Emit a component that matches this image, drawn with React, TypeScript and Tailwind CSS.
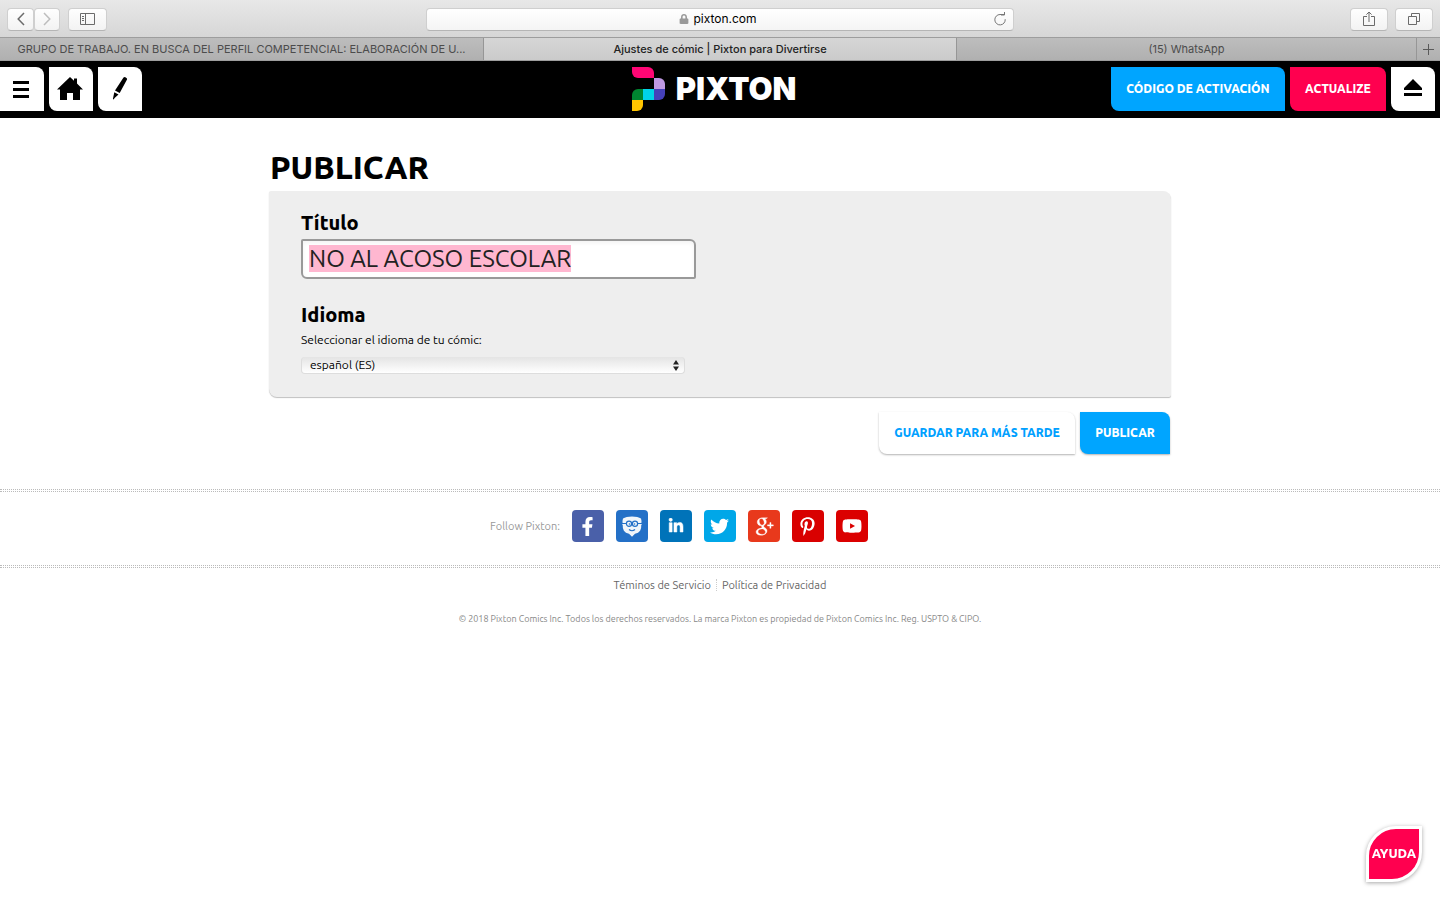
import React, { useEffect, useRef, useState } from "react";
import { FaFacebookF, FaLinkedinIn, FaTwitter, FaPinterestP, FaYoutube, FaLock } from "react-icons/fa";
import { TiSocialGooglePlus } from "react-icons/ti";

const toolbarButton =
  "flex h-[23px] items-center justify-center rounded border border-[#cfcfcf] border-b-[#b5b5b5] bg-linear-to-b from-[#fefefe] to-[#f3f3f3] text-[#6b6b6b]";

const BrowserBar = () => (
  <div className="font-['Inter',sans-serif]">
    <div className="grid h-[37px] grid-cols-[1fr_41.3%_1fr] items-center bg-linear-to-b from-[#e8e8e8] to-[#d6d6d6] px-[7px] pt-px">
      <div className="flex gap-2">
        <div className="flex">
          <button aria-label="Atrás" className={`${toolbarButton} w-[27px]`}>
            <svg width="8" height="14" viewBox="0 0 8 14" fill="none" stroke="currentColor" strokeWidth="1.5">
              <path d="M7 1 1.2 7 7 13" />
            </svg>
          </button>
          <button aria-label="Adelante" className={`${toolbarButton} w-[26px]`}>
            <svg width="8" height="14" viewBox="0 0 8 14" fill="none" stroke="#bdbdbd" strokeWidth="1.5">
              <path d="M1 1 6.8 7 1 13" />
            </svg>
          </button>
        </div>
        <button aria-label="Barra lateral" className={`${toolbarButton} w-[39px]`}>
          <svg width="15" height="12" viewBox="0 0 15 12" fill="none" stroke="currentColor">
            <path d="M.5.5h14v11H.5zM5.5.5v11M2 3.5h2M2 5.5h2M2 7.5h2" />
          </svg>
        </button>
      </div>
      <div className="flex h-[23px] items-center rounded border border-[#cfcfcf] border-b-[#b5b5b5] bg-linear-to-b from-white to-[#f4f4f4] px-1">
        <span className="w-3" />
        <div className="flex flex-1 items-center justify-center gap-1 text-xs text-black">
          <FaLock className="text-[#999999]" size={10} />
          <span>pixton.com</span>
        </div>
        <button aria-label="Recargar" className="w-4 text-[#777777]">
          <svg width="14" height="14" viewBox="0 0 14 14" fill="none" stroke="currentColor">
            <path d="M12.2 7.2A5.2 5.2 0 1 1 7 2.500h4.500M11.500-.5v3.500H8" />
          </svg>
        </button>
      </div>
      <div className="flex justify-end gap-[7px]">
        <button aria-label="Compartir" className={`${toolbarButton} w-[38px]`}>
          <svg width="12" height="16" viewBox="0 0 12 16" fill="none" stroke="currentColor">
            <path d="M4 5.5H.5v9h11v-9H8M6 11V1M3.4 3.6 6 1l2.6 2.6" />
          </svg>
        </button>
        <button aria-label="Pestañas" className={`${toolbarButton} w-[38px]`}>
          <svg width="12" height="12" viewBox="0 0 12 12" fill="none" stroke="currentColor">
            <path d="M.5 3.5h8v8h-8zM3.5 3V.5h8v8H9" />
          </svg>
        </button>
      </div>
    </div>
    <div className="grid h-6 grid-cols-[484fr_473fr_460fr_23px] border-y border-[#9d9d9d] bg-linear-to-b from-[#bdbdbd] to-[#b0b0b0] text-[11px] text-[#4c4c4c]">
      <button className="truncate border-r border-[#969696] px-3">
        GRUPO DE TRABAJO. EN BUSCA DEL PERFIL COMPETENCIAL: ELABORACIÓN DE U...
      </button>
      <button className="truncate border-r border-[#969696] bg-linear-to-b from-[#d6d6d6] to-[#cbcbcb] px-3 font-medium text-[#222222]">
        Ajustes de cómic | Pixton para Divertirse
      </button>
      <button className="truncate border-r border-[#969696] px-3">(15) WhatsApp</button>
      <button aria-label="Nueva pestaña" className="flex items-center justify-center">
        <svg width="11" height="11" viewBox="0 0 11 11" stroke="#5a5a5a">
          <path d="M5.5 0v11M0 5.5h11" />
        </svg>
      </button>
    </div>
  </div>
);

const Logo = () => (
  <a href="#" aria-label="Pixton" className="flex items-center gap-[11px] pr-3">
    <svg width="33" height="44" viewBox="0 0 33 44">
      <path d="M0 0h16a6 6 0 0 1 6 6v5H6a6 6 0 0 1-6-6z" fill="#ff0675" />
      <path d="M22 11h5a6 6 0 0 1 6 6v5H22z" fill="#be98e2" />
      <path d="M22 22h11v5a6 6 0 0 1-6 6h-5z" fill="#4540b9" />
      <path d="M11 22h11v11H11z" fill="#00d3e8" />
      <path d="M11 22v11H0v-5a6 6 0 0 1 6-6z" fill="#008631" />
      <path d="M0 33h11v5a6 6 0 0 1-6 6H0z" fill="#ffc400" />
    </svg>
    <span className="font-['Inter',sans-serif] text-[31px] leading-8 font-black text-white">PIXTON</span>
  </a>
);

const iconButton = "flex size-11 items-center justify-center bg-white text-black";

const Header = () => (
  <header className="grid grid-cols-[1fr_auto_1fr] items-center bg-black pt-1.5 pb-[7px]">
    <nav className="flex gap-[5px]">
      <button aria-label="Menú" className={`${iconButton} rounded-tr-lg pr-0.5`}>
        <svg width="16" height="17" viewBox="0 0 16 17" fill="currentColor">
          <path d="M0 0h16v3H0zM0 7h16v3H0zM0 14h16v3H0z" />
        </svg>
      </button>
      <a href="#" aria-label="Inicio" className={`${iconButton} rounded-tr-lg rounded-bl-lg pr-0.5 pb-0.5`}>
        <svg width="26" height="23" viewBox="0 0 26 23" fill="currentColor">
          <path d="M13 0 0 12.500h3V23h7v-7h6v7h7V12.500h3l-6-6V1.500h-3v2.300z" />
        </svg>
      </a>
      <a href="#" aria-label="Editar" className={`${iconButton} rounded-tr-lg rounded-bl-lg pb-0.5`}>
        <svg width="16" height="23" viewBox="0 0 16 23" fill="currentColor">
          <path d="M11.500.6q1-1 2.300-.2 1.600.8 1.200 2.200L7.700 16 3 13.400zM2.300 15.200l4.200 2.400L2.600 21l-.9 1.600-.8-.5z" />
        </svg>
      </a>
    </nav>
    <Logo />
    <div className="flex justify-end gap-[5px] pr-[5px] text-xs font-extrabold text-white">
      <button className="h-11 w-[174px] rounded-tr-lg rounded-bl-lg bg-[#00a5ff]">CÓDIGO DE ACTIVACIÓN</button>
      <button className="h-11 w-24 rounded-tr-lg rounded-bl-lg bg-[#ff004f]">ACTUALIZE</button>
      <button aria-label="Salir" className={`${iconButton} rounded-tr-lg rounded-bl-lg pb-0.5`}>
        <svg width="18" height="18" viewBox="0 0 18 18" fill="currentColor">
          <path d="M9 0l9 9v2H0V9zM0 14h18v3H0z" />
        </svg>
      </button>
    </div>
  </header>
);

const PublishForm = () => {
  const [title, setTitle] = useState("NO AL ACOSO ESCOLAR");
  const titleRef = useRef<HTMLInputElement>(null);

  useEffect(() => {
    titleRef.current?.focus();
    titleRef.current?.select();
  }, []);

  return (
    <form className="mx-auto w-full max-w-[902px] pt-[29px]" onSubmit={(e) => e.preventDefault()}>
      <h1 className="px-px text-[32px] leading-10 font-extrabold">PUBLICAR</h1>
      <div className="mt-1 rounded-xs rounded-tr-lg rounded-bl-lg bg-[#eeeeee] px-8 pt-5 pb-[23px] shadow-[0_1px_1px_rgba(0,0,0,0.25)]">
        <label htmlFor="title" className="block text-xl leading-6 font-extrabold">
          Título
        </label>
        <input
          id="title"
          ref={titleRef}
          value={title}
          onChange={(e) => setTitle(e.target.value)}
          className="mt-1 block h-10 w-full max-w-[395px] rounded-xs rounded-tr-md rounded-bl-md border-2 border-[#999999] bg-white px-1.5 pb-0.5 text-2xl leading-[27px] font-[450] text-[#222222] inset-shadow-sm outline-none selection:bg-[#ffb6d0fd] selection:text-[#222222]"
        />
        <h2 className="mt-6 text-xl leading-6 font-extrabold">Idioma</h2>
        <label htmlFor="language" className="mt-[3px] block text-xs leading-5 font-[450]">
          Seleccionar el idioma de tu cómic:
        </label>
        <div className="relative mt-[7px] max-w-96">
          <select
            id="language"
            className="block h-[17px] w-full appearance-none rounded border-x border-b border-[#dddddd] bg-linear-to-b from-[#e4e4e4] to-white px-2 text-xs leading-4 font-[450] outline-none"
          >
            <option>español (ES)</option>
          </select>
          <svg className="pointer-events-none absolute top-[3px] right-1.5" width="6" height="11" viewBox="0 0 6 11">
            <path d="M3 0l3 4.500H0zM3 11 0 6.500h6z" fill="#222" />
          </svg>
        </div>
      </div>
      <div className="mt-[15px] flex justify-end gap-[5px] pr-px text-xs font-extrabold">
        <button className="h-[42px] w-[196px] rounded-tr-lg rounded-bl-lg bg-white text-[#00a0ff] shadow-[0_1px_2px_rgba(0,0,0,0.3)]">
          GUARDAR PARA MÁS TARDE
        </button>
        <button className="h-[42px] w-[90px] rounded-tr-lg rounded-bl-lg bg-[#00a5ff] text-white shadow-[0_1px_2px_rgba(0,0,0,0.3)]">
          PUBLICAR
        </button>
      </div>
    </form>
  );
};

const EdmodoIcon = () => (
  <svg width="20" height="21" viewBox="0 0 20 21">
    <path
      d="M1 2.500Q4 .4 10 .4t9 2.100q.7 2 .4 4.500h.6v1.500h-.7q.2 4-1.200 6.200-1.600 2.300-5.100 3.100L10 20.700l-3-2.900q-3.500-.8-5.100-3.100Q.5 12.500.7 8.500H0V7h.6Q.3 4.500 1 2.500z"
      fill="#f1f5fa"
    />
    <g fill="none" stroke="#2470c7" strokeWidth="1.200">
      <circle cx="7" cy="7.800" r="2.600" />
      <circle cx="13" cy="7.800" r="2.600" />
      <path d="M0 7.500h4.400M15.600 7.500H20M7 13.500q3 2.500 6 0" />
    </g>
    <circle cx="7.500" cy="8" r=".8" fill="#2470c7" />
    <circle cx="12.500" cy="8" r=".8" fill="#2470c7" />
  </svg>
);

const socialLinks = [
  { name: "Facebook", color: "bg-[#4a60a9]", icon: <FaFacebookF size={19} /> },
  { name: "Edmodo", color: "bg-[#2470c7]", icon: <EdmodoIcon /> },
  {
    name: "LinkedIn",
    color: "bg-[#0073b9]",
    icon: <FaLinkedinIn size={16} stroke="currentColor" strokeWidth={16} />,
  },
  { name: "Twitter", color: "bg-[#00a7e8]", icon: <FaTwitter size={19} /> },
  {
    name: "Google+",
    color: "bg-[#e8391c]",
    icon: <TiSocialGooglePlus size={28} stroke="currentColor" strokeWidth={0.3} />,
  },
  { name: "Pinterest", color: "bg-[#d90000]", icon: <FaPinterestP size={19} /> },
  { name: "YouTube", color: "bg-[#db0000]", icon: <FaYoutube size={20} /> },
];

const DottedRule = () => <div className="h-[3px] border-y border-dotted border-[#bbbbbb]" />;

const Footer = () => (
  <footer className="mt-[35px] font-[450]">
    <DottedRule />
    <div className="flex items-center justify-center gap-3 pt-[18px] pr-[82px] pb-[23px]">
      <span className="text-[11px] text-[#999999]">Follow Pixton:</span>
      {socialLinks.map((link) => (
        <a
          key={link.name}
          href="#"
          aria-label={link.name}
          className={`flex size-8 items-center justify-center rounded text-white ${link.color}`}
        >
          {link.icon}
        </a>
      ))}
    </div>
    <DottedRule />
    <div className="flex items-center justify-center pt-[7px] text-[11px] leading-5 text-[#666666]">
      <a href="#" className="pr-[5px]">
        Téminos de Servicio
      </a>
      <span className="h-3 border-r border-dotted border-[#cccccc]" />
      <a href="#" className="pl-[5px]">
        Política de Privacidad
      </a>
    </div>
    <p className="mt-4 text-center text-[9px] leading-4 text-[#888888]">
      © 2018 Pixton Comics Inc. Todos los derechos reservados. La marca Pixton es propiedad de Pixton Comics Inc. Reg.
      USPTO &amp; CIPO.
    </p>
  </footer>
);

const App = () => {
  return (
    <div className="min-h-screen bg-white font-['Ubuntu','Noto_Sans',sans-serif] text-black">
      <BrowserBar />
      <Header />
      <main>
        <PublishForm />
      </main>
      <Footer />
      <button className="fixed right-[18px] bottom-[18px] flex size-14 items-center justify-center rounded-tl-[30px] rounded-br-[30px] border-3 border-white bg-[#ff004f] text-[13px] font-extrabold text-white shadow-[0_1px_4px_rgba(0,0,0,0.35)]">
        AYUDA
      </button>
    </div>
  );
};

export default App;
